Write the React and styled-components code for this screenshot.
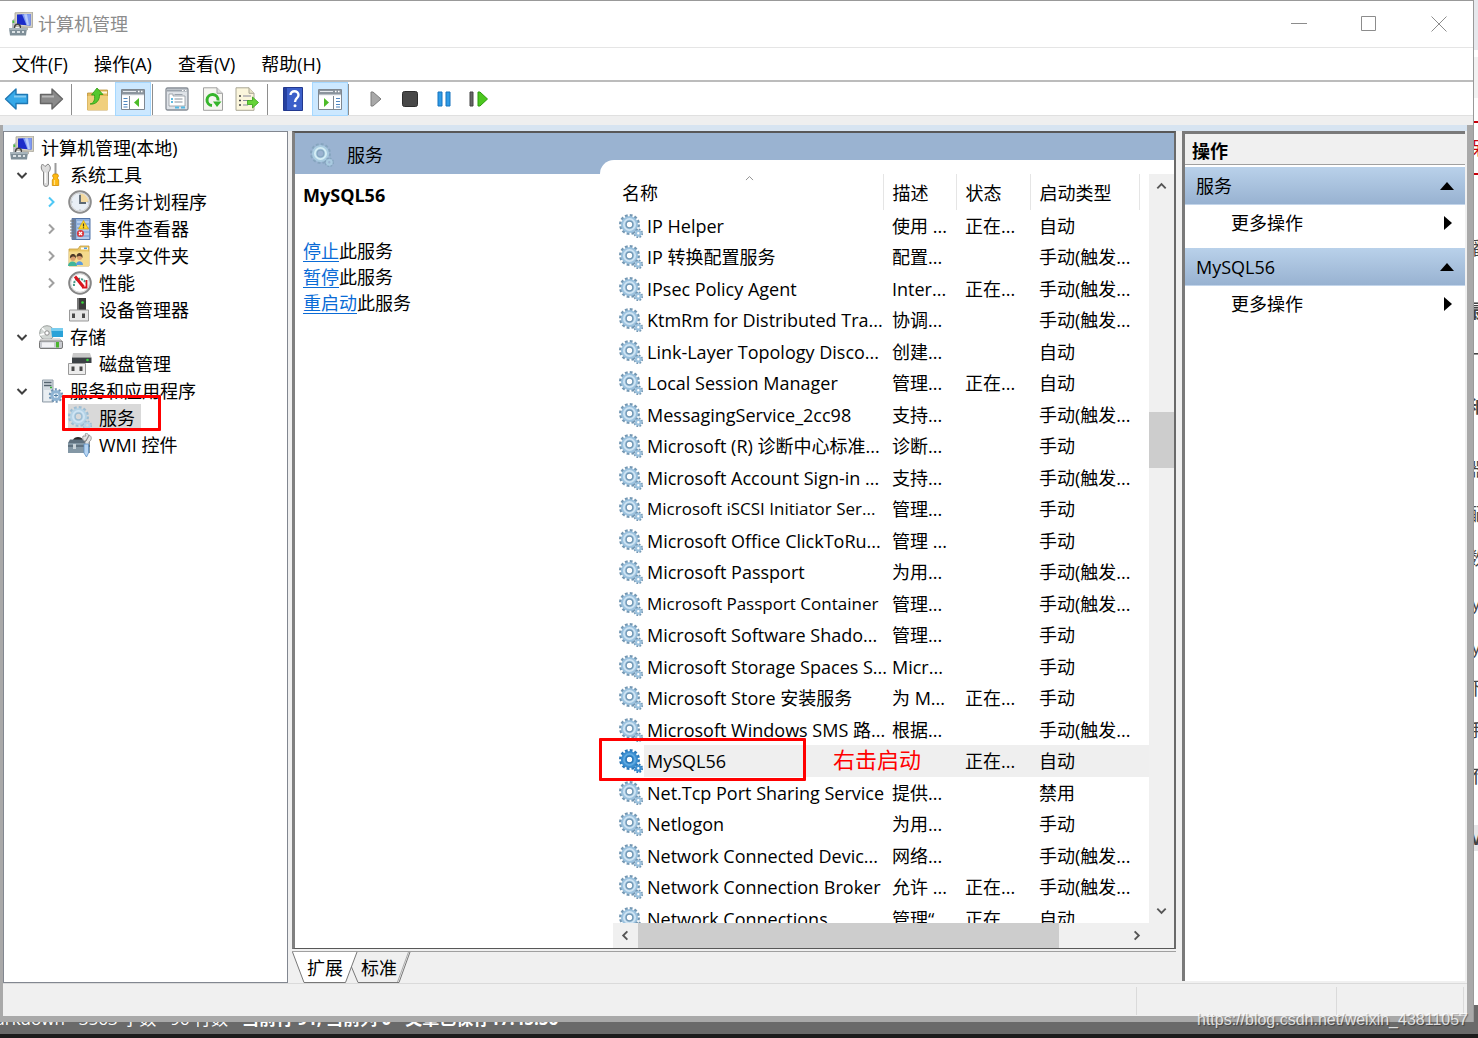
import React from 'react';
import styled, { createGlobalStyle, css } from 'styled-components';

const GlobalStyle = createGlobalStyle`
  * {
    box-sizing: border-box;
  }

  body {
    margin: 0;
    background: #fff;
    color: #000;
    font-family: 'Open Sans', 'Noto Sans CJK SC', sans-serif;
    font-size: 18px;
    line-height: 26px;
  }

  button {
    margin: 0;
    padding: 0;
    border: 0;
    background: none;
    color: inherit;
    font: inherit;
  }

  ul {
    margin: 0;
    padding: 0;
    list-style: none;
  }

  svg {
    display: block;
    flex: none;
  }
`;

/* ---------- desktop ---------- */

const Desktop = styled.div`
  position: relative;
  display: grid;
  grid-template-columns: minmax(0, 1fr) 4px;
  grid-template-rows: minmax(0, 1fr) 16px;
  height: 100vh;
  overflow: hidden;
`;

const BehindPage = styled.div`
  display: flex;
  flex-direction: column;
  overflow: hidden;
  background: linear-gradient(#e6e8ec 50px, #fff 50px, #fff 57px, #f2f2f2 57px, #f2f2f2 98px, #fff 98px);
  border-bottom: 17px solid #6a6a6a;
`;

const BehindGlyph = styled.span`
  display: flex;
  flex: none;
  justify-content: center;
  height: 26px;
  margin-top: ${props => props.$gap}px;
  background: ${props => (props.$shaded ? '#e6e6e8' : 'none')};
  color: #444;
  font-weight: ${props => (props.$bold ? 700 : 400)};
  white-space: nowrap;
`;

const BehindBox = styled.span`
  flex: none;
  display: flex;
  align-items: center;
  justify-content: center;
  height: 54px;
  margin-top: 121px;
  border: solid #c8000a;
  border-width: 2px 0;
  color: #c8000a;
`;

const EditorStatus = styled.div`
  grid-column: 1 / -1;
  display: flex;
  align-items: flex-end;
  gap: 14px;
  padding-bottom: 5px;
  overflow: hidden;
  background: #6a6a6a;
  border-bottom: 4px solid #1c1c1c;
  color: #fff;
  font-size: 17px;
  line-height: 20px;
  white-space: nowrap;

  span:first-child {
    margin-left: -20px;
  }
`;

const Watermark = styled.span`
  position: absolute;
  right: 10px;
  bottom: 8px;
  color: rgba(255, 255, 255, 0.8);
  font: 16px/20px 'Liberation Sans', sans-serif;
  text-shadow: 1px 1px 1px rgba(0, 0, 0, 0.4);
`;

/* ---------- window ---------- */

const Window = styled.div`
  display: flex;
  flex-direction: column;
  min-width: 0;
  border-top: 1px solid #999;
  border-right: 1px solid #999;
  background: #fff;
`;

const TitleBar = styled.header`
  display: flex;
  align-items: center;
  gap: 5px;
  flex: none;
  height: 47px;
  padding: 0 2px 0 9px;
  border-bottom: 1px solid #e5e5e5;
  color: #8c8c8c;
`;

const WindowTitle = styled.h1`
  flex: 1;
  margin: 0;
  font-size: 18px;
  font-weight: 400;
`;

const CaptionButton = styled.button`
  display: grid;
  place-items: center;
  width: 65px;
  height: 46px;
  color: #8c8c8c;
`;

const MenuBar = styled.nav`
  display: flex;
  align-items: center;
  gap: 26px;
  flex: none;
  height: 34px;
  padding-left: 12px;
  border-bottom: 2px solid #bcbcbc;
`;

const Toolbar = styled.div`
  display: flex;
  flex: none;
  height: 34px;
  border-bottom: 1px solid #e0e0e0;
`;

const ToolButton = styled.button`
  display: grid;
  place-items: center;
  width: ${props => props.$width || 34}px;
  height: 34px;

  ${props => props.$pressed && css`
    background: #cce8ff;
    border: 1px solid #a6d8ff;
  `}
`;

const ToolDivider = styled.span`
  width: 1px;
  height: 31px;
  margin: 2px ${props => props.$after}px 0 ${props => props.$before}px;
  background: #8e8e8e;
`;

const Frame = styled.div`
  display: flex;
  flex: 1;
  flex-direction: column;
  min-height: 0;
  margin-top: 9px;
  padding-top: 6px;
  border: solid #a9a9a9;
  border-width: 0 6px 6px 3px;
  background: linear-gradient(#d7e4f1 6px, #f0f0f0 6px);
  box-shadow: 0 -9px #efefef;
`;

const Panes = styled.div`
  display: grid;
  flex: 1;
  grid-template-columns: 285px minmax(0, 1fr) 287px;
  gap: 4px;
  min-height: 0;
`;

const StatusBar = styled.footer`
  display: flex;
  flex: none;
  justify-content: flex-end;
  height: 33px;
  padding: 3px 3px 1px 0;
  border-top: 1px solid #dadada;
`;

const StatusCell = styled.span`
  width: ${props => props.$width}px;
  border-left: 1px solid #dadada;
`;

/* ---------- console tree ---------- */

const TreePane = styled.aside`
  padding-top: 2px;
  overflow: hidden;
  border: 1px solid #828790;
  background: #fff;
`;

const TreeRow = styled.li`
  position: relative;
  display: flex;
  align-items: center;
  height: 27px;
  padding-left: ${props => (props.$depth ? props.$depth * 29 - 18 : 6)}px;
  white-space: nowrap;
`;

const Expander = styled.span`
  display: flex;
  align-items: center;
  flex: none;
  width: 24px;
  color: ${props => (props.$hot ? '#4fc8f5' : props.$open ? '#404040' : '#a0a0a0')};
`;

const TreeLabel = styled.button`
  display: flex;
  align-items: center;
  gap: 7px;
  height: 27px;
  padding-right: 6px;
  background: ${props => (props.$selected ? '#d9d9d9' : 'none')};
`;

const Marker = styled.span`
  position: absolute;
  top: ${props => props.$top}px;
  left: ${props => props.$left}px;
  width: ${props => props.$width}px;
  height: ${props => props.$height}px;
  border: 3px solid #f00;
  border-radius: 1px;
  pointer-events: none;
`;

/* ---------- services view ---------- */

const CenterPane = styled.main`
  display: flex;
  flex-direction: column;
  min-width: 0;
  min-height: 0;
`;

const View = styled.div`
  display: grid;
  flex: 1;
  grid-template-columns: 305px minmax(0, 1fr);
  min-height: 0;
  border-style: solid;
  border-width: 2px 2px 1px 3px;
  border-color: #585858 #6a6a6a #585858 #808080;
  background: #9ab3d1;
`;

const Detail = styled.section`
  display: flex;
  flex-direction: column;
`;

const Banner = styled.div`
  display: flex;
  align-items: center;
  gap: 13px;
  flex: none;
  height: 41px;
  padding: 2px 0 0 15px;
`;

const DetailBody = styled.div`
  flex: 1;
  padding: 8px;
  background: #fff;
`;

const DetailTitle = styled.h2`
  margin: 0 0 30px;
  font-size: 18px;
  line-height: 26px;
`;

const DetailLink = styled.a`
  color: #0a6bd6;
  text-underline-offset: 3px;
`;

const Results = styled.section`
  position: relative;
  display: grid;
  grid-template-columns: minmax(0, 1fr) 25px;
  grid-template-rows: minmax(0, 1fr) 25px;
  min-height: 0;
  margin-top: 27px;
  padding: 14px 0 0 13px;
  border-top-left-radius: 14px;
  background: #fff;
`;

const TableClip = styled.div`
  min-height: 0;
  overflow: hidden;
`;

const Table = styled.table`
  width: 100%;
  border-collapse: collapse;
  table-layout: fixed;
  line-height: 24px;
  white-space: nowrap;
`;

const Col = styled.col`
  width: ${props => props.$width}px;
`;

const HeadCell = styled.th`
  position: relative;
  height: 36px;
  padding: 2px 0 0 9px;
  border-right: 1px solid #e5e5e5;
  font-weight: 400;
  text-align: left;

  &:last-child {
    border-right: 0;
  }
`;

const SortMark = styled.span`
  position: absolute;
  top: -1px;
  left: 131px;
  color: #777;
`;

const Row = styled.tr`
  height: 31px;
  background: ${props => (props.$selected ? 'linear-gradient(90deg, #fff 31px, #efefef 31px)' : 'none')};

  &:nth-child(even) {
    height: 32px;
  }
`;

const Cell = styled.td`
  padding: 0 0 0 9px;
`;

const NameCell = styled.td`
  padding: 0 0 0 6px;
`;

const NameWrap = styled.span`
  display: flex;
  align-items: center;
  gap: 4px;
  height: 24px;
  font-size: ${props => (props.$long ? 17 : 18)}px;
`;

const Note = styled.span`
  position: absolute;
  top: 584px;
  left: 233px;
  color: #f00;
  font-size: 22px;
  line-height: 30px;
`;

const Scrollbar = styled.div`
  display: flex;
  flex-direction: ${props => (props.$vertical ? 'column' : 'row')};
  background: #f0f0f0;
`;

const ScrollButton = styled.button`
  display: grid;
  place-items: center;
  flex: none;
  width: 25px;
  height: 25px;
  color: #555;
`;

const Track = styled.span`
  flex: ${props => props.$grow} 1 0;
`;

const Thumb = styled.span`
  flex: none;
  width: ${props => props.$width}px;
  height: ${props => props.$height}px;
  background: #cdcdcd;
`;

const ScrollCorner = styled.span`
  background: #f0f0f0;
`;

const TabStrip = styled.div`
  display: flex;
  flex: none;
  height: 32px;
  margin-top: 2px;
  border-top: 1px solid #a0a0a0;
`;

const Tab = styled.button`
  position: relative;
  width: ${props => (props.$active ? 66 : 60)}px;
  height: 31px;
  margin-left: ${props => (props.$active ? 0 : -7)}px;
  padding-right: ${props => (props.$active ? 0 : 4)}px;

  svg {
    position: absolute;
    top: 0;
    left: 0;
  }

  span {
    position: relative;
  }
`;

/* ---------- actions ---------- */

const ActionsPane = styled.aside`
  margin: 0 2px 2px 2px;
  border: solid #7a7a7a;
  border-width: 3px 0 0 3px;
  background: #fff;
`;

const ActionsHeader = styled.h2`
  height: 31px;
  margin: 0 0 2px;
  padding: 4px 7px 0;
  border-bottom: 1px solid #a0a0a0;
  background: #f0f0f0;
  font-size: 18px;
  line-height: 26px;
`;

const ActionGroup = styled.button`
  display: flex;
  align-items: center;
  justify-content: space-between;
  width: 100%;
  height: 38px;
  padding: 0 11px;
  border-bottom: 1px solid #c3d5ea;
  background: linear-gradient(#b9d1ea, #98b2d1);
`;

const ActionItem = styled.button`
  display: flex;
  align-items: center;
  justify-content: space-between;
  width: 100%;
  height: 36px;
  margin-bottom: 7px;
  padding: 0 13px 0 46px;
`;

/* ---------- icons ---------- */

const Chevron = ({ dir, size = 14, width = 2 }) => {
  const turn = { right: 0, down: 90, left: 180, up: 270 }[dir];
  return (
    <svg width={size} height={size} viewBox="0 0 14 14" fill="none" stroke="currentColor" strokeWidth={width}>
      <path d="M5 2.5 9.5 7 5 11.5" transform={`rotate(${turn} 7 7)`} />
    </svg>
  );
};

const GearIcon = ({ body = '#9cc2de', edge = '#7397b3', ring = '#cfe4f3', hole = '#fff' }) => (
  <svg width="24" height="24" viewBox="0 0 24 24" fill="none">
    <circle cx="10.5" cy="10.5" r="9" stroke={edge} strokeWidth="3" strokeDasharray="2.7 2.01" />
    <circle cx="10.5" cy="10.5" r="5.8" fill={hole} stroke={body} strokeWidth="5.6" />
    <circle cx="10.5" cy="10.5" r="5.6" stroke={ring} strokeWidth="1.8" />
    <circle cx="10.5" cy="10.5" r="3.300" stroke={edge} strokeWidth="1.200" />
    <circle cx="19.300" cy="19.300" r="3.800" stroke={edge} strokeWidth="2" strokeDasharray="1.700 1.280" />
    <circle cx="19.300" cy="19.300" r="2.300" fill={hole} stroke={body} strokeWidth="2.200" />
  </svg>
);

const ComputerIcon = () => (
  <svg width="24" height="24" viewBox="0 0 24 24">
    <path d="M6 .8 23.500 0v15.500L6 14.500z" fill="#d5d2c4" stroke="#a5a297" strokeWidth=".8" />
    <path d="M8 2.500 21.500 2v11.500L8 12.500z" fill="#1b2bc9" />
    <path d="M13 2.300 21.500 2v11.500l-4-.3z" fill="#7e9bf2" />
    <path d="m15 2.300 3 0 2 11-2-.2z" fill="#b9cbfa" />
    <path d="M3 8.500 6 6v10H3z" fill="#b9bdc0" />
    <path d="M3.500 8.500h1.800v2.500H3.500z" fill="#47c03a" />
    <path d="M5.500 16c0-5 6-5 6 0" fill="none" stroke="#444" strokeWidth="1.500" />
    <path d="M12 15h7v3l-5 1z" fill="#b8b5aa" />
    <path d="M0 16h18l-1 7.500H1z" fill="#7f8f98" />
    <path d="M0 16h18v2H0z" fill="#a7b4bb" />
    <path d="M3 19h3v2H3zM8 19h3v2H8zM13 19h2v2h-2z" fill="#dce3e6" />
  </svg>
);

const ToolsIcon = () => (
  <svg width="24" height="24" viewBox="0 0 24 24">
    <path d="M3.500 1 6 3.500 9 1c3 2 3 6 .5 8v12a2.500 2.500 0 0 1-5 0V9C2 7 1.500 3 3.500 1z" fill="#dcdcdc" stroke="#858585" />
    <path d="M6.500 9.500V20" stroke="#fff" strokeWidth="1.500" />
    <path d="M15.500 0h2v11h-2z" fill="#9a9a9a" />
    <path d="M14.500 11h4l1 2-1.200 2 1.400 2v5.500h-6.400V17l1.400-2-1.200-2z" fill="#fdb913" stroke="#d08b00" strokeWidth=".8" />
    <path d="M15.500 17v5" stroke="#ffe28a" strokeWidth="1.200" />
  </svg>
);

const ClockIcon = () => (
  <svg width="24" height="24" viewBox="0 0 24 24">
    <circle cx="12" cy="12" r="10.800" fill="#e8edf2" stroke="#8d8d8d" strokeWidth="2" />
    <circle cx="12" cy="12" r="9.200" fill="#e9eff6" stroke="#cfcfcf" />
    <path d="M12 12V3.500a8.500 8.500 0 0 1 8.500 8.500z" fill="#f3d9a0" />
    <path d="M12 5v8h6" fill="none" stroke="#5c6873" strokeWidth="1.800" />
    <path d="M12 3.500v1M12 19.500v1M3.500 12h1M19.500 12h1" stroke="#8a96a0" />
  </svg>
);

const EventIcon = () => (
  <svg width="24" height="24" viewBox="0 0 24 24">
    <path d="M4 1.500h18v21H4z" fill="#8fb0dd" stroke="#5274a8" />
    <path d="M4 1.500h4v21H4z" fill="#6a7f9f" />
    <path d="M9 5h12M9 9h12M9 13h12M9 17h12M9 21h12" stroke="#dce8f7" />
    <path d="M2 4h4M2 7h4M2 10h4M2 13h4M2 16h4M2 19h4" stroke="#777" strokeWidth="1.200" />
    <path d="m15.500 3.500 5 8.500h-10z" fill="#ffd92b" stroke="#d9a400" strokeWidth=".7" />
    <path d="M15.500 6.500v3M15.500 10.300v1" stroke="#333" strokeWidth="1.200" />
    <circle cx="12.500" cy="16.500" r="3.600" fill="#d93a3f" />
    <path d="m11 15 3 3m0-3-3 3" stroke="#fff" strokeWidth="1.200" />
  </svg>
);

const SharedIcon = () => (
  <svg width="24" height="24" viewBox="0 0 24 24">
    <path d="M1 5h9l2-3h9v20H1z" fill="#e9c766" stroke="#c59c3d" strokeWidth=".8" />
    <path d="M13 3.500h7v2h-7z" fill="#fff" />
    <path d="M16 3.500h3v1.500h-3z" fill="#4c9be0" />
    <path d="M1 7.500h20V22H1z" fill="#f4da8c" />
    <path d="M0 22c0-6 9-6 9 0z" fill="#3fb59a" />
    <path d="M8 21c0-5 7-5 7 0z" fill="#5a9be0" />
    <circle cx="5" cy="14.500" r="2.500" fill="#dba070" />
    <circle cx="11.500" cy="13.500" r="2.500" fill="#dba070" />
    <path d="M2 14.500c-1-6 7-6 6 0-1-2-3-3-6 0zM8.500 13c0-6 7-5 6 1-1-2-3-3-6-1z" fill="#4d3a28" />
  </svg>
);

const PerfIcon = () => (
  <svg width="24" height="24" viewBox="0 0 24 24">
    <circle cx="12" cy="12" r="10.800" fill="#f4f4f4" stroke="#858585" strokeWidth="2" />
    <circle cx="12" cy="12" r="9.300" fill="#fff" stroke="#cfcfcf" />
    <path d="M6 15c-1-8 8-10 12-3" fill="none" stroke="#4a9a8a" strokeWidth="2" strokeDasharray="2 1" />
    <path d="m7 5.500 8.500 10.500" stroke="#d8141c" strokeWidth="3" />
    <path d="M18.500 9v7.500H14" fill="none" stroke="#d8141c" strokeWidth="1.800" />
  </svg>
);

const DeviceIcon = () => (
  <svg width="24" height="24" viewBox="0 0 24 24">
    <path d="M9 0h9v12H9z" fill="#3a3a3a" />
    <path d="M9 0h2v12H9z" fill="#777" />
    <circle cx="14.500" cy="4.500" r="1.300" fill="#37d63a" />
    <path d="M1.500 12h19v11h-19z" fill="#e6e6e6" stroke="#999" />
    <path d="M4 15.500h3v4.500H4zM14 15.500h3v4.500h-3z" fill="#4a4a4a" />
  </svg>
);

const StorageIcon = () => (
  <svg width="24" height="24" viewBox="0 0 24 24">
    <circle cx="8" cy="8" r="7.300" fill="#d2d7d4" stroke="#9a9f9c" />
    <path d="M8 8 3 3M8 8l-7 2" stroke="#fff" strokeWidth="1.500" />
    <circle cx="8" cy="8" r="2.200" fill="#fff" stroke="#8a8a8a" />
    <path d="M12 3h12v9H13z" fill="#2aa2d8" />
    <path d="M12 3h12v3H12z" fill="#79cdef" />
    <path d="M2 14h19l3 3H0z" fill="#efefef" stroke="#aaa" strokeWidth=".7" />
    <rect x=".5" y="16" width="23" height="7.500" rx="1.500" fill="#c9cbd0" stroke="#777" />
    <path d="M3 17.500h12v4.500H3z" fill="#f1f1f4" />
    <path d="M17 17h3v5.500h-3z" fill="#4bb52e" />
  </svg>
);

const DiskIcon = () => (
  <svg width="24" height="24" viewBox="0 0 24 24">
    <path d="M5 1h17l1.500 4.500H4z" fill="#c9c9c9" />
    <path d="M4 5.500h19.500V11H4z" fill="#3c4145" />
    <circle cx="19.500" cy="8" r="1.300" fill="#37d63a" />
    <path d="M.5 11.500h17v11H.5z" fill="#ececec" stroke="#999" />
    <path d="M3.500 14.500h3v4.500h-3zM11.500 14.500h3v4.500h-3z" fill="#4a4a4a" />
  </svg>
);

const ServerIcon = () => (
  <svg width="24" height="24" viewBox="0 0 24 24">
    <path d="M3.500 1H14v22H3.500z" fill="#d3dbe2" stroke="#94a0ab" />
    <path d="M5 3.500h7.500M5 6.500h7.500" stroke="#55636f" strokeWidth="1.500" />
    <path d="M11 8.500h2" stroke="#37b53a" strokeWidth="1.500" />
    <path d="M5 11h7v11H5z" fill="#e9eef2" />
    <circle cx="17" cy="16.500" r="6" fill="none" stroke="#6f93b2" strokeWidth="2.500" strokeDasharray="2 1.770" />
    <circle cx="17" cy="16.500" r="4" fill="#eef6fc" stroke="#8fb4d3" strokeWidth="3" />
    <path d="M15 16.500h4M17 14.500v4" stroke="#4f7ea5" />
  </svg>
);

const WmiIcon = () => (
  <svg width="24" height="24" viewBox="0 0 24 24">
    <path d="M5 7c1-4 9-4 10 0z" fill="#2b2b2b" />
    <path d="M2 6.500h18l2 3.500H0z" fill="#5e707e" />
    <path d="M0 10h22v10H0z" fill="#8397a5" />
    <path d="M0 13h22" stroke="#4a5b68" strokeWidth="1.200" />
    <path d="M5 11h3v5H5z" fill="#c9d3da" />
    <path d="M15 3c-1 4 1 5.500 3 5l3-5c-1-3-3-3-4-2l1 2zM21 2c3 1 3 5 0 7v3h-4V9z" fill="#e3e3e3" stroke="#888" strokeWidth=".8" />
    <path d="M16 11h4.500v9l-2 4-2.500-4z" fill="#b6d5f3" stroke="#5d8fc4" strokeWidth=".8" />
  </svg>
);

const ArrowIcon = ({ fill, edge, flip }) => (
  <svg width="26" height="24" viewBox="0 0 26 24">
    <path
      d="M1.500 12 12 2v5.500h11.500v9H12V22z"
      transform={flip ? 'translate(26 0) scale(-1 1)' : undefined}
      fill={fill}
      stroke={edge}
      strokeWidth="1.400"
      strokeLinejoin="round"
    />
    <path d={flip ? 'M4 9.500h12' : 'M10 9.500h12'} stroke="#fff" strokeOpacity=".4" strokeWidth="2" />
  </svg>
);

const FolderUpIcon = () => (
  <svg width="24" height="24" viewBox="0 0 24 24">
    <path d="M1.500 6h9l2-3h9v20h-20z" fill="#e3b95a" stroke="#bd9238" strokeWidth=".8" />
    <path d="M14 4.500h7v2h-7z" fill="#fff6dc" />
    <path d="M1.500 9h20.500v14H1.500z" fill="#f0cf7c" />
    <path d="M4 17c4-1 5-4 4.500-9H5.500L11 1l6 6.500h-3.500C14 13 10 18 4 17z" fill="#55c82e" stroke="#2f9a12" strokeWidth=".8" />
  </svg>
);

const PaneIcon = ({ right }) => (
  <svg width="24" height="22" viewBox="0 0 24 22">
    <path d="M.5 1.500h23v20H.5z" fill="#fff" stroke="#7f8790" />
    <path d="M1 2h22v5H1z" fill="#8b949d" />
    <path d="M2 3.500h13M1 7h22" stroke="#e6eaee" />
    <path d="M17 3.500h1.500M20 3.500h1.500" stroke="#fff" strokeWidth="1.500" />
    <path d={right ? 'M15.500 8v13' : 'M8.500 8v13'} stroke="#7f8790" />
    <path
      d={right ? 'M18 10.500h4M18 13.500h4M18 16.500h4M18 19h4' : 'M2.500 10.500h4M2.500 13.500h4M2.500 16.500h4M2.500 19h4'}
      stroke="#4f86c0"
      strokeWidth="1.200"
    />
    <path d={right ? 'm6 10 5 4.500L6 19z' : 'm18 10-5 4.500 5 4.500z'} fill="#4dbb29" />
  </svg>
);

const PropertiesIcon = () => (
  <svg width="24" height="24" viewBox="0 0 24 24">
    <rect x="1" y="1" width="22" height="22" rx="1.500" fill="#dfe3e8" stroke="#868d95" strokeWidth="1.300" />
    <path d="M2 3.500h20" stroke="#9aa2ab" strokeWidth="2" />
    <path d="M17 3.500h1.500M20 3.500h1.500" stroke="#fff" />
    <path d="M4 7h4v2h12v10H4z" fill="#fff" stroke="#8f979f" strokeWidth=".8" />
    <path d="M9.500 7.500h8" stroke="#9aa2ab" />
    <path d="M6 12h2M6 15h2" stroke="#2ba5d8" strokeWidth="1.500" />
    <path d="M9.500 12h8M9.500 15h8" stroke="#87909a" />
    <path d="M10 20.500h4M16 20.500h4" stroke="#54b9e5" strokeWidth="2" />
  </svg>
);

const RefreshIcon = () => (
  <svg width="22" height="24" viewBox="0 0 22 24">
    <path d="M1.500.8H15l5.500 5.500v17h-19z" fill="#f5f5f0" stroke="#a0a0a0" />
    <path d="M15 .8v5.500h5.500" fill="#dcdcdc" stroke="#a0a0a0" />
    <path d="M10 18.500a5.500 5.500 0 1 1 6-5" fill="none" stroke="#35b52b" strokeWidth="3" />
    <path d="M11 14.500h8.500L15 20z" fill="#35b52b" />
  </svg>
);

const ExportIcon = () => (
  <svg width="24" height="24" viewBox="0 0 24 24">
    <path d="M1 .8h13l5 5.500v17H1z" fill="#fbf6dc" stroke="#a9a695" />
    <path d="M14 .8v5.500h5" fill="#e8e3c6" stroke="#a9a695" />
    <path d="M4 9h2M4 13.500h2M4 18h2" stroke="#444" strokeWidth="1.500" />
    <path d="M8 9h8M8 13.500h6M8 18h5" stroke="#8c8a9c" strokeWidth="1.200" />
    <path d="M12.500 13.500h5V10l6 5.500-6 5.500v-3.500h-5z" fill="#66d338" stroke="#34a015" strokeWidth=".8" />
  </svg>
);

const HelpIcon = () => (
  <svg width="20" height="24" viewBox="0 0 20 24">
    <path d="M.5.5h19v23H.5z" fill="#3c5fc9" stroke="#22388f" />
    <path d="M1 1h3v22H1z" fill="#26409f" />
    <path d="M7.500 8c0-5 8-5 8 0 0 3.500-3.500 3-3.500 7" fill="none" stroke="#fff" strokeWidth="2.400" />
    <circle cx="12" cy="18.700" r="1.500" fill="#fff" />
  </svg>
);

const PlayIcon = () => (
  <svg width="12" height="16" viewBox="0 0 12 16">
    <path d="M1 1h2l8 7-8 7H1z" fill="#a8a8a8" stroke="#7d7d7d" />
  </svg>
);

const StopIcon = () => (
  <svg width="16" height="16" viewBox="0 0 16 16">
    <rect x=".5" y=".5" width="15" height="15" rx="2" fill="#484848" stroke="#2d2d2d" />
  </svg>
);

const PauseIcon = () => (
  <svg width="14" height="16" viewBox="0 0 14 16">
    <path d="M1 1h4v14H1zM9 1h4v14H9z" fill="#2f9be6" stroke="#1672bd" />
  </svg>
);

const RestartIcon = () => (
  <svg width="20" height="16" viewBox="0 0 20 16">
    <path d="M1 1h3v14H1z" fill="#666" stroke="#444" />
    <path d="M9 1h2l7.500 7L11 15H9z" fill="#4cc71f" stroke="#2a9c0a" />
  </svg>
);

const Triangle = ({ right }) => (
  <svg width={right ? 8 : 14} height={right ? 14 : 8} viewBox={right ? '0 0 8 14' : '0 0 14 8'}>
    <path d={right ? 'M0 0v14l8-7z' : 'M0 8h14L7 0z'} />
  </svg>
);

/* ---------- data ---------- */

const menus = ['文件(F)', '操作(A)', '查看(V)', '帮助(H)'];

const tree = [
  { depth: 0, label: '计算机管理(本地)', icon: <ComputerIcon /> },
  { depth: 1, label: '系统工具', icon: <ToolsIcon />, state: 'open' },
  { depth: 2, label: '任务计划程序', icon: <ClockIcon />, state: 'closed', hot: true },
  { depth: 2, label: '事件查看器', icon: <EventIcon />, state: 'closed' },
  { depth: 2, label: '共享文件夹', icon: <SharedIcon />, state: 'closed' },
  { depth: 2, label: '性能', icon: <PerfIcon />, state: 'closed' },
  { depth: 2, label: '设备管理器', icon: <DeviceIcon /> },
  { depth: 1, label: '存储', icon: <StorageIcon />, state: 'open' },
  { depth: 2, label: '磁盘管理', icon: <DiskIcon /> },
  { depth: 1, label: '服务和应用程序', icon: <ServerIcon />, state: 'open' },
  { depth: 2, label: '服务', icon: <GearIcon body="#b5d3e6" edge="#9dbdd3" hole="#d9d9d9" />, selected: true },
  { depth: 2, label: 'WMI 控件', icon: <WmiIcon /> },
];

const services = [
  ['IP Helper', '使用 ...', '正在...', '自动'],
  ['IP 转换配置服务', '配置...', '', '手动(触发...'],
  ['IPsec Policy Agent', 'Inter...', '正在...', '手动(触发...'],
  ['KtmRm for Distributed Tra...', '协调...', '', '手动(触发...'],
  ['Link-Layer Topology Disco...', '创建...', '', '自动'],
  ['Local Session Manager', '管理...', '正在...', '自动'],
  ['MessagingService_2cc98', '支持...', '', '手动(触发...'],
  ['Microsoft (R) 诊断中心标准...', '诊断...', '', '手动'],
  ['Microsoft Account Sign-in ...', '支持...', '', '手动(触发...'],
  ['Microsoft iSCSI Initiator Ser...', '管理...', '', '手动'],
  ['Microsoft Office ClickToRu...', '管理 ...', '', '手动'],
  ['Microsoft Passport', '为用...', '', '手动(触发...'],
  ['Microsoft Passport Container', '管理...', '', '手动(触发...'],
  ['Microsoft Software Shado...', '管理...', '', '手动'],
  ['Microsoft Storage Spaces S...', 'Micr...', '', '手动'],
  ['Microsoft Store 安装服务', '为 M...', '正在...', '手动'],
  ['Microsoft Windows SMS 路...', '根据...', '', '手动(触发...'],
  ['MySQL56', '', '正在...', '自动'],
  ['Net.Tcp Port Sharing Service', '提供...', '', '禁用'],
  ['Netlogon', '为用...', '', '手动'],
  ['Network Connected Devic...', '网络...', '', '手动(触发...'],
  ['Network Connection Broker', '允许 ...', '正在...', '手动(触发...'],
  ['Network Connections', '管理“', '正在', '自动'],
];

// names that would run into the next column at full size
const longNames = ['Microsoft Passport Container', 'Microsoft iSCSI Initiator Ser...'];

const links = ['停止', '暂停', '重启动'];

const behind = [
  { text: '播', gap: 60 },
  { text: '最', gap: 37, bold: true },
  { text: '一', gap: 17 },
  { text: '和', gap: 27, bold: true },
  { text: '器', gap: 36 },
  { text: '配', gap: 19 },
  { text: '数', gap: 18 },
  { text: 'y', gap: 19 },
  { text: 'y', gap: 18 },
  { text: '下', gap: 15 },
  { text: '手', gap: 16 },
  { text: '不', gap: 20 },
  { text: 'V', gap: 36, bold: true, shaded: true },
];

/* ---------- parts ---------- */

const Tools = () => (
  <Toolbar>
    <ToolButton aria-label="后退"><ArrowIcon fill="#35a8e8" edge="#1f78b4" /></ToolButton>
    <ToolButton aria-label="前进"><ArrowIcon flip fill="#8a8a8a" edge="#666" /></ToolButton>
    <ToolDivider $before={3} $after={9} />
    <ToolButton aria-label="上移"><FolderUpIcon /></ToolButton>
    <ToolButton aria-label="显示控制台树" $width={36} $pressed><PaneIcon /></ToolButton>
    <ToolDivider $before={1} $after={7} />
    <ToolButton aria-label="属性"><PropertiesIcon /></ToolButton>
    <ToolButton aria-label="刷新" $width={38}><RefreshIcon /></ToolButton>
    <ToolButton aria-label="导出列表" $width={30}><ExportIcon /></ToolButton>
    <ToolDivider $before={5} $after={6} />
    <ToolButton aria-label="帮助" $width={38}><HelpIcon /></ToolButton>
    <ToolButton aria-label="显示操作窗格" $width={36} $pressed><PaneIcon right /></ToolButton>
    <ToolDivider $before={0} $after={10} />
    <ToolButton aria-label="启动"><PlayIcon /></ToolButton>
    <ToolButton aria-label="停止"><StopIcon /></ToolButton>
    <ToolButton aria-label="暂停"><PauseIcon /></ToolButton>
    <ToolButton aria-label="重新启动" $width={36}><RestartIcon /></ToolButton>
  </Toolbar>
);

const ConsoleTree = () => (
  <TreePane>
    <ul>
      {tree.map(node => (
        <TreeRow key={node.label} $depth={node.depth}>
          {node.depth > 0 && (
            <Expander $open={node.state === 'open'} $hot={node.hot}>
              {node.state && <Chevron dir={node.state === 'open' ? 'down' : 'right'} />}
            </Expander>
          )}
          <TreeLabel $selected={node.selected}>
            {node.icon}
            {node.label}
          </TreeLabel>
          {node.selected && <Marker $top={-9} $left={58} $width={99} $height={36} />}
        </TreeRow>
      ))}
    </ul>
  </TreePane>
);

const ServiceTable = () => (
  <TableClip>
    <Table>
      <colgroup>
        <Col $width={270} />
        <Col $width={73} />
        <Col $width={74} />
        <Col $width={109} />
        <col />
      </colgroup>
      <thead>
        <tr>
          <HeadCell>
            名称
            <SortMark><Chevron dir="up" size={11} width={1} /></SortMark>
          </HeadCell>
          <HeadCell>描述</HeadCell>
          <HeadCell>状态</HeadCell>
          <HeadCell>启动类型</HeadCell>
          <HeadCell aria-hidden="true" />
        </tr>
      </thead>
      <tbody>
        {services.map(([name, description, status, startup]) => {
          const selected = name === 'MySQL56';
          return (
            <Row key={name} $selected={selected}>
              <NameCell>
                <NameWrap $long={longNames.includes(name)}>
                  {selected ? <GearIcon body="#3b8ed0" edge="#2a78b8" ring="#5fa9e0" /> : <GearIcon />}
                  {name}
                </NameWrap>
              </NameCell>
              <Cell>{description}</Cell>
              <Cell>{status}</Cell>
              <Cell>{startup}</Cell>
              <td />
            </Row>
          );
        })}
      </tbody>
    </Table>
  </TableClip>
);

const ServicesView = () => (
  <CenterPane>
    <View>
      <Detail>
        <Banner>
          <GearIcon body="#a9cbe0" edge="#86a5bf" ring="#d5eef5" hole="#9ab3d1" />
          服务
        </Banner>
        <DetailBody>
          <DetailTitle>MySQL56</DetailTitle>
          {links.map(link => (
            <div key={link}>
              <DetailLink href="#">{link}</DetailLink>此服务
            </div>
          ))}
        </DetailBody>
      </Detail>
      <Results>
        <ServiceTable />
        <Scrollbar $vertical>
          <ScrollButton aria-label="向上滚动"><Chevron dir="up" size={13} /></ScrollButton>
          <Track $grow={213} />
          <Thumb $width={25} $height={56} />
          <Track $grow={431} />
          <ScrollButton aria-label="向下滚动"><Chevron dir="down" size={13} /></ScrollButton>
        </Scrollbar>
        <Scrollbar>
          <ScrollButton aria-label="向左滚动"><Chevron dir="left" size={13} /></ScrollButton>
          <Thumb $width={421} $height={25} />
          <Track $grow={1} />
          <ScrollButton aria-label="向右滚动"><Chevron dir="right" size={13} /></ScrollButton>
        </Scrollbar>
        <ScrollCorner />
        <Marker $top={578} $left={-1} $width={207} $height={43} />
        <Note>右击启动</Note>
      </Results>
    </View>
    <TabStrip>
      <Tab $active>
        <svg width="66" height="31" viewBox="0 0 66 31">
          <path d="M.5 0 12 30.500h41.500L65 0" fill="#fff" stroke="#777" />
        </svg>
        <span>扩展</span>
      </Tab>
      <Tab>
        <svg width="60" height="31" viewBox="0 0 60 31" fill="none" stroke="#777">
          <path d="M.5 15 7 30.500h41L59 0" />
          <path d="M46.500 30 57.500 0" stroke="#aaa" />
        </svg>
        <span>标准</span>
      </Tab>
    </TabStrip>
  </CenterPane>
);

const Actions = () => (
  <ActionsPane>
    <ActionsHeader>操作</ActionsHeader>
    {['服务', 'MySQL56'].map(group => (
      <React.Fragment key={group}>
        <ActionGroup>
          {group}
          <Triangle />
        </ActionGroup>
        <ActionItem>
          更多操作
          <Triangle right />
        </ActionItem>
      </React.Fragment>
    ))}
  </ActionsPane>
);

const App = () => (
  <Desktop>
    <GlobalStyle />
    <Window>
      <TitleBar>
        <ComputerIcon />
        <WindowTitle>计算机管理</WindowTitle>
        <CaptionButton aria-label="最小化">
          <svg width="16" height="16" stroke="currentColor"><path d="M0 7.500h16" /></svg>
        </CaptionButton>
        <CaptionButton aria-label="最大化">
          <svg width="16" height="16" fill="none" stroke="currentColor"><path d="M.5.5h14v14H.5z" /></svg>
        </CaptionButton>
        <CaptionButton aria-label="关闭">
          <svg width="16" height="16" stroke="currentColor"><path d="m.5.5 15 15m0-15-15 15" /></svg>
        </CaptionButton>
      </TitleBar>
      <MenuBar>
        {menus.map(menu => <button key={menu}>{menu}</button>)}
      </MenuBar>
      <Tools />
      <Frame>
        <Panes>
          <ConsoleTree />
          <ServicesView />
          <Actions />
        </Panes>
        <StatusBar>
          <StatusCell $width={200} />
          <StatusCell $width={127} />
          <StatusCell $width={1} />
        </StatusBar>
      </Frame>
    </Window>
    <BehindPage aria-hidden="true">
      <BehindBox>保</BehindBox>
      {behind.map((item, index) => (
        <BehindGlyph key={index} $gap={item.gap} $bold={item.bold} $shaded={item.shaded}>{item.text}</BehindGlyph>
      ))}
    </BehindPage>
    <EditorStatus>
      <span>Markdown</span>
      <span>3563 字数</span>
      <span>96 行数</span>
      <b>当前行 91, 当前列 0</b>
      <b>文章已保存17:45:56</b>
    </EditorStatus>
    <Watermark>https://blog.csdn.net/weixin_43811057</Watermark>
  </Desktop>
);

export default App;
